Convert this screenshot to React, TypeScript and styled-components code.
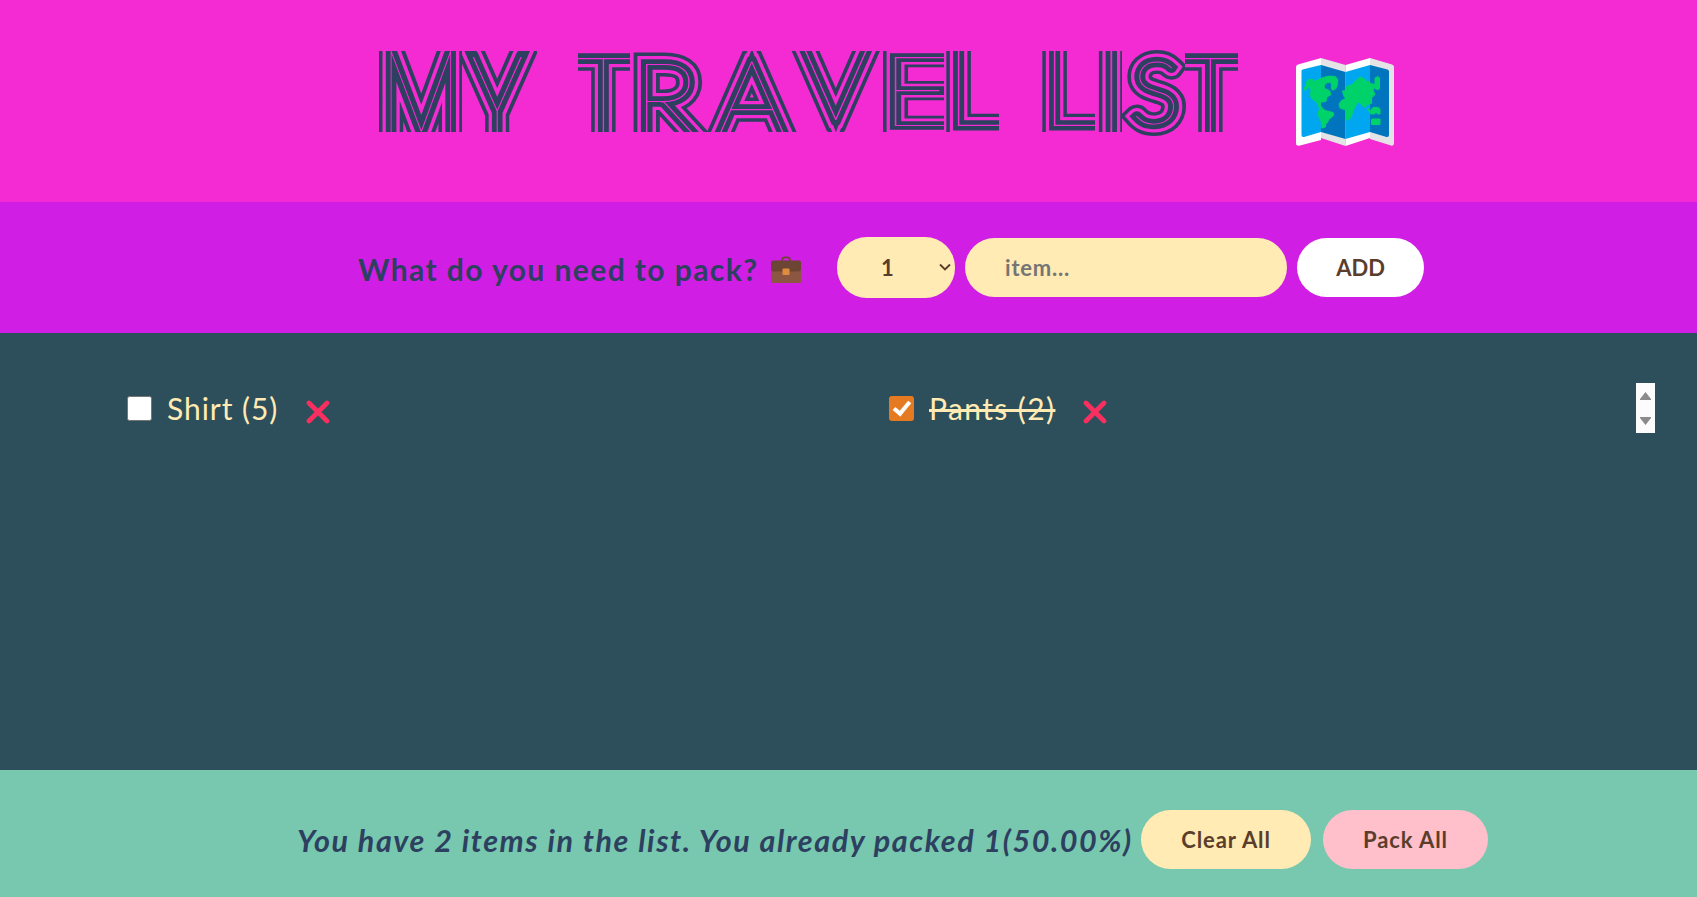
import React, { useState } from 'react';
import styled, { createGlobalStyle, css } from 'styled-components';

const ink = '#2d405f';
const pink = '#f42bd2';
const cream = '#ffebb3';
const brown = '#5a3e2b';

const GlobalStyle = createGlobalStyle`
  *, *::before, *::after { box-sizing: border-box; }
  body { margin: 0; }
  button, input, select { font: inherit; }
`;

const Page = styled.div`
  display: grid;
  grid-template-rows: 202px 131px 1fr 127px;
  width: 100%;
  height: 100vh;
  overflow: hidden;
  font-family: Lato, 'Liberation Sans', sans-serif;
  color: ${ink};
`;

const Header = styled.header`
  display: flex;
  align-items: flex-start;
  background: ${pink};
  padding: 47px 0 0 379px;
`;

const Title = styled.h1`
  display: flex;
  margin: 0;
  font-weight: 100;
`;

const Word = styled.span`
  display: flex;
  margin-right: 41px;
`;

type GlyphProps = {
  $size: number;
  $base: number;
  $dx: number;
  $sx?: number;
  $sy?: number;
};

const layer = css`
  content: attr(data-letter);
  position: absolute;
  inset: 0;
`;

/* One letter cell: the strokes that leave the cell are cut flat at its edges. */
const LetterCell = styled.span<{ $w: number; $gap?: number; $round?: boolean }>`
  width: ${(p) => p.$w}px;
  height: 89px;
  margin-left: ${(p) => p.$gap ?? 0}px;
  clip-path: inset(${(p) => (p.$round ? '0 -1px' : '4px 0')});
`;

/* Concentric outlines around a hairline letter give the striped look. */
const Glyph = styled.span<GlyphProps>`
  position: relative;
  display: block;
  width: max-content;
  height: 89px;
  line-height: 89px;
  font-size: ${(p) => p.$size}px;
  transform-origin: 0 ${(p) => 44.5 + 0.387 * p.$size}px;
  transform: translate(${(p) => p.$dx}px, ${(p) => p.$base - 44.5 - 0.387 * p.$size}px)
    scale(${(p) => p.$sx ?? 1}, ${(p) => p.$sy ?? 1});
  color: ${ink};
  -webkit-text-stroke: 23px ${ink};
  &::before {
    ${layer}
    color: ${pink};
    -webkit-text-stroke: 16px ${pink};
  }
  &::after {
    ${layer}
    color: ${pink};
    paint-order: stroke fill;
    -webkit-text-stroke: 9.5px ${ink};
  }
`;

type LetterSpec = {
  c: string;
  w: number;
  gap?: number;
  size: number;
  base: number;
  dx: number;
  sx?: number;
  sy?: number;
  round?: boolean;
};

const words: LetterSpec[][] = [
  [
    { c: 'M', w: 83, size: 90, base: 106, dx: 1, sx: 1.02, sy: 1.6 },
    { c: 'Y', w: 75, size: 92, base: 104, dx: 9, sy: 1.45 },
  ],
  [
    { c: 'T', w: 52, size: 110, base: 88.5, dx: -6 },
    { c: 'R', w: 77, gap: 2, size: 104, base: 90, dx: 1, sx: 1.08 },
    { c: 'A', w: 90, gap: -2, size: 106, base: 90, dx: 9, sx: 1.06 },
    { c: 'V', w: 90, gap: -6, size: 106, base: 74, dx: 9, sx: 1.06 },
    { c: 'E', w: 62, gap: 1, size: 125, base: 79.5, dx: -2, sx: 1.02, sy: 0.79 },
    { c: 'L', w: 53, gap: 2, size: 128, base: 79.5, dx: -3, sy: 0.95 },
  ],
  [
    { c: 'L', w: 53, gap: 2, size: 128, base: 79.5, dx: -3, sy: 0.95 },
    { c: 'I', w: 25, gap: 2, size: 150, base: 98, dx: -4 },
    { c: 'S', w: 63, size: 89, base: 76.5, dx: 9, sx: 1.04, round: true },
    { c: 'T', w: 53, size: 110, base: 88.5, dx: -6 },
  ],
];

const MapIcon = styled.svg`
  width: 98px;
  height: 88px;
  margin: 11px 0 0 17px;
`;

const AddForm = styled.form`
  display: flex;
  align-items: center;
  background: #d01ee5;
  padding-left: 358px;
`;

const Question = styled.h3`
  display: flex;
  align-items: center;
  width: 479px;
  margin: 3px 0 0;
  font-size: 30px;
  font-weight: 700;
  letter-spacing: 1.43px;
  white-space: nowrap;
  svg {
    width: 30px;
    height: 27px;
    margin: 1px 0 0 13px;
  }
`;

const pill = css`
  flex: none;
  height: 59px;
  border: 0;
  border-radius: 30px;
  color: ${brown};
  font-size: 22px;
  font-weight: 700;
`;

const SelectWrap = styled.div`
  position: relative;
  margin-right: 10px;
  svg {
    position: absolute;
    right: 4px;
    top: 26px;
    pointer-events: none;
  }
`;

const Quantity = styled.select`
  ${pill}
  appearance: none;
  display: block;
  width: 118px;
  height: 61px;
  padding: 0 40px 0 44px;
  background: ${cream};
`;

const ItemInput = styled.input`
  ${pill}
  width: 322px;
  padding: 0 40px;
  margin-right: 10px;
  letter-spacing: 0.8px;
  background: ${cream};
  &::placeholder {
    color: #757575;
    opacity: 1;
  }
`;

const Button = styled.button<{ $w: number; $bg: string; $ls?: number }>`
  ${pill}
  width: ${(p) => p.$w}px;
  padding: 0;
  letter-spacing: ${(p) => p.$ls ?? 0}px;
  background: ${(p) => p.$bg};
  cursor: pointer;
`;

const List = styled.main`
  display: flex;
  align-items: flex-start;
  background: #2d4f5b;
  padding: 50px 42px 0 127px;
`;

const Items = styled.ul`
  display: grid;
  grid-template-columns: 762px 1fr;
  flex: 1;
  height: 50px;
  margin: 0;
  padding: 0;
  list-style: none;
`;

const Item = styled.li`
  display: flex;
  align-items: center;
  color: ${cream};
  font-size: 30px;
`;

const Check = styled.input`
  appearance: none;
  display: grid;
  place-items: center;
  width: 25px;
  height: 25px;
  margin: 0 15px 0 0;
  border: 1px solid #767676;
  border-radius: 2.5px;
  background: #fff;
  &:checked {
    border-color: #e67a20;
    background: #e67a20;
  }
  &:checked::after {
    content: '';
    width: 9.5px;
    height: 17px;
    margin-top: -4px;
    border: solid #fff;
    border-width: 0 4px 4px 0;
    transform: rotate(40deg);
  }
`;

const ItemName = styled.span<{ $packed: boolean; $ls: number }>`
  letter-spacing: ${(p) => p.$ls}px;
  text-decoration: ${(p) => (p.$packed ? 'line-through 3px' : 'none')};
`;

const Remove = styled.button`
  display: flex;
  margin: 8px 0 0 28px;
  padding: 0;
  border: 0;
  background: none;
`;

const Scroller = styled.div`
  display: flex;
  flex-direction: column;
  justify-content: space-between;
  align-items: center;
  width: 19px;
  height: 50px;
  padding: 9px 0 8px;
  background: #fcfcfc;
`;

const Footer = styled.footer`
  display: flex;
  align-items: flex-start;
  background: #78c8af;
  padding: 40px 0 0 297px;
`;

const Stats = styled.em`
  width: 844px;
  line-height: 60px;
  font-size: 30.5px;
  font-weight: 700;
  letter-spacing: 1.57px;
  white-space: nowrap;
`;

const Actions = styled.div`
  display: flex;
  gap: 12px;
`;

const WorldMap = () => (
  <MapIcon viewBox="0 0 98 88">
    <path d="M2 6.500 25 0v82L4 87.500Q0 88.500 0 85V9Q0 7 2 6.500Z" fill="#fff" />
    <path d="M25 0 49.500 7v81L25 80Z" fill="#e4e4e6" />
    <path d="M49.500 7 74 0v80l-24.500 8Z" fill="#fff" />
    <path d="M74 0 96 6.500Q98 7 98 9v76q0 3.500-3 2.600L74 81Z" fill="#e4e4e6" />
    <path d="M6.500 11.500 25 7v67L8 79q-2.500.5-2.500-2V13q0-1 1-1.500Z" fill="#00a6f0" />
    <path d="M25 7 49.500 14v67L25 74Z" fill="#0074bc" />
    <path d="M49.500 14 74 7v67l-24.500 7Z" fill="#00a6f0" />
    <path d="M74 7 91.500 11.500q1.500.5 1.500 2V77q0 2.500-2.500 2L74 74Z" fill="#0074bc" />
    <g fill="#00d26a" stroke="#00d26a" strokeWidth="1" strokeLinejoin="round">
      <path d="M8 32 11 23q1-2 3.500-1.500h2.500l1 2L26 20q6-3 13-1.500 3.500 2 2.500 7-1 6.500-4.500 6.500-2.500 0-1.500-4.500 0-4-4-3-4 1.500-3 6l5 2 1.500 4-4.500 3-.5 4-5 .5-1 3q4 5 5 5.500l8 2q2 3-1.500 5-3 .5-4 5-3 1-2 4.500l-3.500 1-1-7-3-6.500 1.500-6L21 44.500q-5-3-6.500-6l.5-6.500-2-3.500-4 4Z" />
      <path d="m46.500 33 4-.5V28.500l5.500-2 4.500-4.500 3.500-3 4 1.500 2.500 3q4-1 3.500 2l5 1V20l3-1.500 1.500 1.500v10q0 1.500-2 1.500-3 0-2.500-2.500l-2 3 2 4.500-3.500 3.500v5.500l-4.500 1-2 3-3-2-1.500-2-2.500-1.500-3 4.500-2.500 6-1.500 5-3 2.500h-2.500V52l-5.500-2-1-4 2.500-3.500 4.500-2-2-2Z" />
      <path d="m71.500 50 3.500 3q.5-4 4-3.500 5-.5 5 2.500v4h-2.500l-1-2-2 2h-3.500l-3.500-5ZM76 61h8v5.500h-8.500v-5Z" />
    </g>
  </MapIcon>
);

const Briefcase = () => (
  <svg viewBox="0 0 30 27">
    <path d="M11 6V4q0-2.700 3-2.700h2q3 0 3 2.700v2" fill="none" stroke="#6d4534" strokeWidth="1.700" />
    <rect x="0" y="6" width="30" height="21" rx="1.500" fill="#8b5743" />
    <path d="M0 6q0-1.500 2-1.500h26q2 0 2 1.500v7q0 2.500-3 2.500H3q-3 0-3-2.500Z" fill="#6d4534" />
    <rect x="11.500" y="12.500" width="7" height="6.500" rx="1" fill="#dd8d3d" />
  </svg>
);

const Cross = () => (
  <svg width="24" height="24" viewBox="0 0 24 24">
    <path d="M3 3l18 18M21 3 3 21" stroke="#f92f60" strokeWidth="4.700" strokeLinecap="round" />
  </svg>
);

const initial = [
  { name: 'Shirt', quantity: 5, packed: false, ls: 0.95 },
  { name: 'Pants', quantity: 2, packed: true, ls: 1.4 },
];

export default function App() {
  const [items, setItems] = useState(initial);
  const packed = items.filter((i) => i.packed).length;
  const percent = items.length ? ((packed / items.length) * 100).toFixed(2) : '0.00';
  return (
    <Page>
      <GlobalStyle />
      <Header>
        <Title>
          {words.map((word, i) => (
            <Word key={i}>
              {word.map((l, j) => (
                <LetterCell key={j} $w={l.w} $gap={l.gap} $round={l.round}>
                  <Glyph data-letter={l.c} $size={l.size} $base={l.base} $dx={l.dx} $sx={l.sx} $sy={l.sy}>
                    {l.c}
                  </Glyph>
                </LetterCell>
              ))}
            </Word>
          ))}
        </Title>
        <WorldMap />
      </Header>
      <AddForm onSubmit={(e) => e.preventDefault()}>
        <Question>
          What do you need to pack?
          <Briefcase />
        </Question>
        <SelectWrap>
          <Quantity defaultValue="1">
            <option value="1">1</option>
          </Quantity>
          <svg width="12" height="9" viewBox="0 0 12 9">
            <path d="M1 1.500 6 6.500l5-5" fill="none" stroke={brown} strokeWidth="1.900" />
          </svg>
        </SelectWrap>
        <ItemInput placeholder="item..." />
        <Button $w={127} $bg="#fff">
          ADD
        </Button>
      </AddForm>
      <List>
        <Items>
          {items.map((item, i) => (
            <Item key={item.name}>
              <Check
                type="checkbox"
                checked={item.packed}
                onChange={() => setItems(items.map((x, k) => (k === i ? { ...x, packed: !x.packed } : x)))}
              />
              <ItemName $packed={item.packed} $ls={item.ls}>
                {`${item.name} (${item.quantity})`}
              </ItemName>
              <Remove onClick={() => setItems(items.filter((x) => x !== item))}>
                <Cross />
              </Remove>
            </Item>
          ))}
        </Items>
        <Scroller>
          <svg width="11" height="8" viewBox="0 0 11 8">
            <path d="M5.500 0 11 7v1H0V7Z" fill="#8b8b8b" />
          </svg>
          <svg width="11" height="8" viewBox="0 0 11 8">
            <path d="M5.500 8 11 1V0H0v1Z" fill="#8b8b8b" />
          </svg>
        </Scroller>
      </List>
      <Footer>
        <Stats>{`You have ${items.length} items in the list. You already packed ${packed}(${percent}%)`}</Stats>
        <Actions>
          <Button $w={170} $bg={cream} $ls={0.9} onClick={() => setItems([])}>
            Clear All
          </Button>
          <Button
            $w={165}
            $bg="#ffc0cb"
            $ls={0.9}
            onClick={() => setItems(items.map((x) => ({ ...x, packed: true })))}
          >
            Pack All
          </Button>
        </Actions>
      </Footer>
    </Page>
  );
}
